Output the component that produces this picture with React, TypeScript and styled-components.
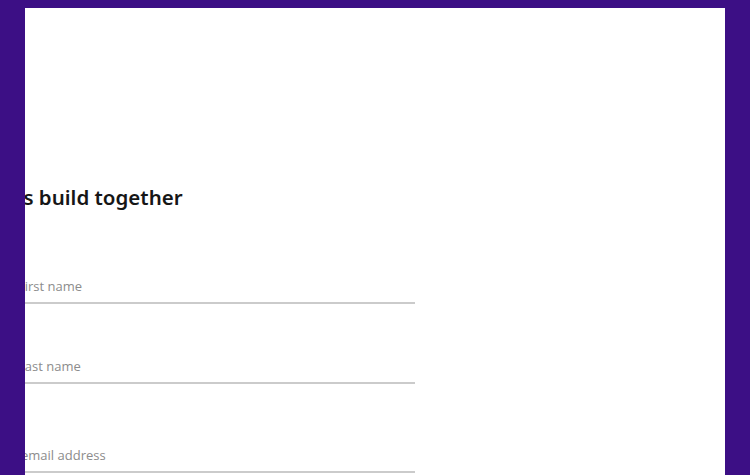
import React from "react";
import styled, { createGlobalStyle } from "styled-components";

const GlobalStyle = createGlobalStyle`
  html, body {
    margin: 0;
    padding: 0;
    background: #3c0f85;
    overflow: hidden;
  }
  * { box-sizing: border-box; }
`;

const Page = styled.div`
  padding: 8px 25px 0;
  height: 475px;
`;

const Panel = styled.main`
  background: #ffffff;
  height: 100%;
  overflow: hidden;
  padding-top: 177px;
`;

const Form = styled.form`
  display: flex;
  flex-direction: column;
  margin-left: -7px;
  width: 397px;
`;

const Title = styled.h1`
  margin: 0 0 61px -31px;
  font-family: "Noto Sans", "Lato", sans-serif;
  font-weight: 600;
  font-size: 20.5px;
  line-height: 24px;
  color: #161616;
  white-space: nowrap;
`;

const Field = styled.input<{ $gap: number; $indent?: number }>`
  display: block;
  width: 100%;
  height: 34px;
  margin: 0 0 ${(p) => p.$gap}px 0;
  padding: 0 0 0 ${(p) => p.$indent ?? 0}px;
  border: none;
  border-bottom: 2px solid #cbcbcb;
  outline: none;
  background: transparent;
  font-family: "Open Sans", "Noto Sans", sans-serif;
  font-size: 13px;
  color: #333;
  &::placeholder {
    color: #8c8c8c;
    opacity: 1;
  }
`;

export default function App() {
  return (
    <>
      <GlobalStyle />
      <Page>
        <Panel>
          <Form onSubmit={(e) => e.preventDefault()}>
            <Title>Let's build together</Title>
            <Field type="text" placeholder="First name" $gap={46} />
            <Field type="text" placeholder="Last name" $gap={55} />
            <Field type="email" placeholder="email address" $gap={40} $indent={3} />
          </Form>
        </Panel>
      </Page>
    </>
  );
}
